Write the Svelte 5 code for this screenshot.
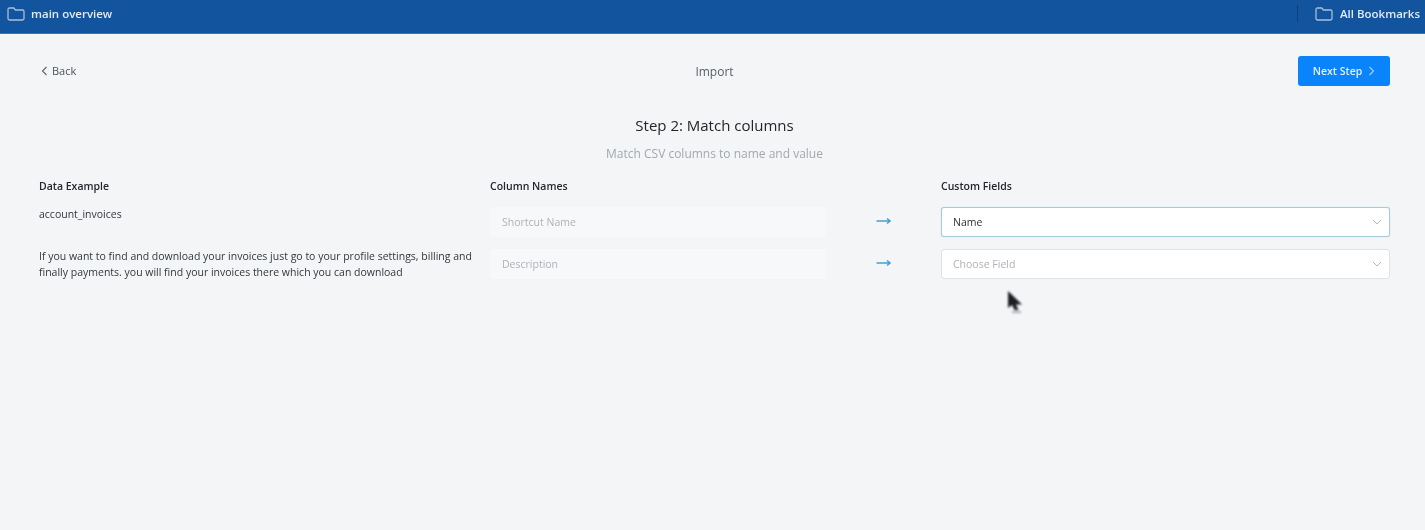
<script lang="ts">
	const rows = [
		{
			example: 'account_invoices',
			column: 'Shortcut Name',
			field: 'Name',
			active: true
		},
		{
			example:
				'If you want to find and download your invoices just go to your profile settings, billing and finally payments. you will find your invoices there which you can download',
			column: 'Description',
			field: 'Choose Field',
			active: false
		}
	];
</script>

{#snippet folder()}
	<svg class="folder" width="18" height="14" viewBox="0 0 18 14" fill="none" aria-hidden="true">
		<path d="M1 3V11.6C1 12.4 1.6 13 2.4 13H15.6C16.4 13 17 12.4 17 11.6V4.4C17 3.6 16.4 3 15.6 3H8.4L6.8 1H2.4C1.6 1 1 1.6 1 2.4V3Z" stroke="#a9bedb" stroke-width="1.3" />
	</svg>
{/snippet}

<div class="page">
	<header class="topbar">
		<div class="crumb">
			{@render folder()}
			<span>main overview</span>
		</div>
		<div class="crumb right">
			<span class="divider"></span>
			{@render folder()}
			<span>All Bookmarks</span>
		</div>
	</header>

	<main class="content">
		<div class="toolbar">
			<button class="back">
				<svg width="7" height="10" viewBox="0 0 7 10" fill="none" aria-hidden="true">
					<path d="M5.5 1L1.5 5L5.5 9" stroke="#5f646b" stroke-width="1.1" />
				</svg>
				Back
			</button>
			<div class="title">Import</div>
			<div class="next-wrap">
				<button class="next">
					Next Step
					<svg width="7" height="10" viewBox="0 0 7 10" fill="none" aria-hidden="true">
						<path d="M1.5 1L5.5 5L1.5 9" stroke="#a8d4ff" stroke-width="1.1" />
					</svg>
				</button>
			</div>
		</div>

		<h1>Step 2: Match columns</h1>
		<p class="sub">Match CSV columns to name and value</p>

		<div class="grid">
			<div class="head">Data Example</div>
			<div class="head">Column Names</div>
			<div></div>
			<div class="head">Custom Fields</div>

			{#each rows as row}
				<div class="example">{row.example}</div>
				<div class="column-name">{row.column}</div>
				<div class="arrow">
					<svg width="15" height="8" viewBox="0 0 15 8" fill="none" aria-hidden="true">
						<path d="M0.5 4H13.5M11 1.5L14 4L11 6.5" stroke="#4a9fd0" stroke-width="1.5" />
					</svg>
				</div>
				<div class="select" class:active={row.active}>
					<span>{row.field}</span>
					<svg width="10" height="6" viewBox="0 0 10 6" fill="none" aria-hidden="true">
						<path d="M1 1L5 5L9 1" stroke="#b4b9c0" stroke-width="1" />
					</svg>
				</div>
			{/each}
		</div>
	</main>

	<svg class="cursor" width="20" height="28" viewBox="0 0 20 28" aria-hidden="true">
		<path d="M1 1L1 18L5 15L7.5 20L11.5 20L9 14.5L15 14.5Z" fill="#1c1e22" />
		<path d="M5 22H14" stroke="#7d8085" stroke-width="2" opacity="0.6" />
	</svg>
</div>

<style>
	:global(body) {
		margin: 0;
		background: #f3f5f7;
	}

	.page {
		position: relative;
		height: 530px;
		overflow: hidden;
		background: #f3f5f7;
		font-family: 'Open Sans', sans-serif;
		filter: blur(0.3px);
	}

	.topbar {
		display: flex;
		align-items: center;
		justify-content: space-between;
		height: 33px;
		padding: 0 5px 0 7px;
		background: #12549e;
		border-bottom: 1px solid #3f74b4;
		color: #e2eaf5;
		font-size: 11.5px;
		font-weight: 600;
	}

	.crumb {
		display: flex;
		align-items: center;
		gap: 6px;
		margin-top: -6px;
	}

	.crumb.right {
		gap: 7px;
	}

	.divider {
		width: 1px;
		height: 17px;
		margin-right: 10px;
		background: #0d3f7c;
	}

	.content {
		padding: 22px 35px 0 39px;
	}

	.toolbar {
		display: grid;
		grid-template-columns: 1fr 1fr 1fr;
		align-items: center;
		height: 30px;
	}

	button {
		border: 0;
		font-family: inherit;
		cursor: pointer;
	}

	.back {
		display: flex;
		align-items: center;
		gap: 4px;
		padding: 0 0 1px 2px;
		background: none;
		color: #4e5359;
		font-size: 11px;
		font-weight: 500;
	}

	.title {
		text-align: center;
		color: #5a5f66;
		font-size: 12px;
	}

	.next-wrap {
		display: flex;
		justify-content: flex-end;
	}

	.next {
		display: flex;
		align-items: center;
		justify-content: center;
		gap: 6px;
		width: 92px;
		height: 30px;
		padding: 0 0 1px;
		border-radius: 3px;
		background: #0a84fb;
		color: #e0efff;
		font-size: 10.5px;
		font-weight: 600;
	}

	h1 {
		margin: 28px 0 0;
		text-align: center;
		color: #22252b;
		font-size: 15px;
		font-weight: 400;
		line-height: 22px;
	}

	.sub {
		margin: 10px 0 0;
		text-align: center;
		color: #a3a8af;
		font-size: 12px;
		line-height: 16px;
	}

	.grid {
		display: grid;
		grid-template-columns: 451px 336px 115px 449px;
		row-gap: 12px;
		margin-top: 15px;
	}

	.head {
		color: #24272d;
		font-size: 10.5px;
		font-weight: 600;
		line-height: 18px;
	}

	.example {
		max-width: 436px;
		margin-top: -1px;
		color: #33373d;
		font-size: 10.5px;
		line-height: 16px;
	}

	.column-name {
		display: flex;
		align-items: center;
		box-sizing: border-box;
		height: 30px;
		padding-left: 12px;
		border-radius: 2px;
		background: #f7f8fa;
		color: #aeb2b8;
		font-size: 10.5px;
	}

	.arrow {
		display: flex;
		align-items: center;
		height: 28px;
		padding-left: 50px;
	}

	.select {
		display: flex;
		align-items: center;
		justify-content: space-between;
		box-sizing: border-box;
		height: 30px;
		padding: 0 7px 0 11px;
		border: 1px solid #dfe3e8;
		border-radius: 3px;
		background: #ffffff;
		color: #aeb2b8;
		font-size: 10.5px;
	}

	.select.active {
		border-color: #a9c9df;
		color: #2c3036;
		box-shadow: 0 0 1px #a9c9df;
	}

	.cursor {
		position: absolute;
		left: 1007px;
		top: 290px;
		filter: blur(0.8px);
	}
</style>
